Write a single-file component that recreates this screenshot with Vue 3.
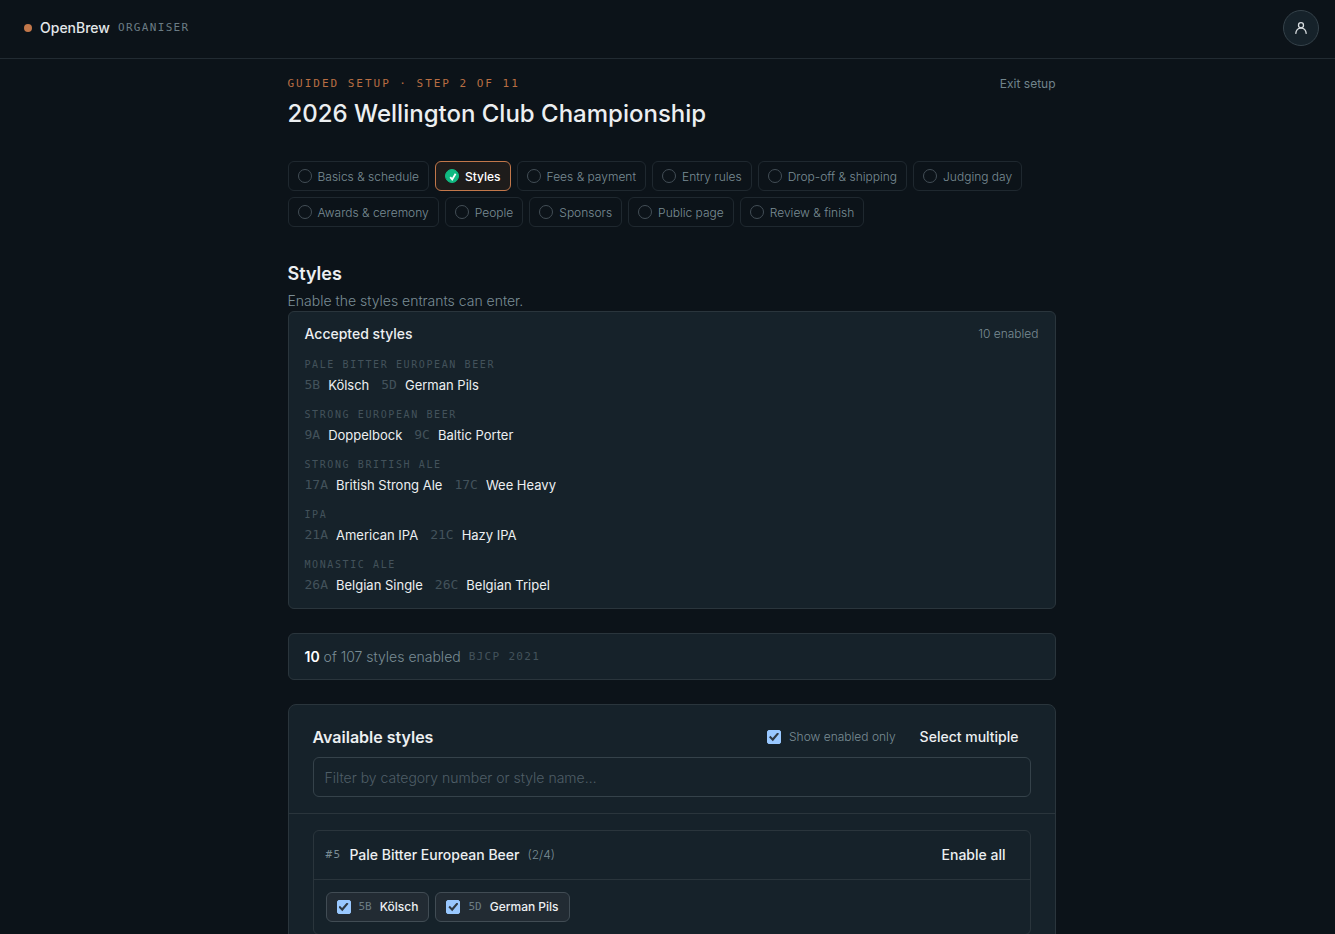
<template>
  <div class="page">
    <header class="topbar">
      <a class="brand" href="#">
        <span class="brand-dot"></span>
        <span class="brand-name">OpenBrew</span>
        <span class="brand-role">ORGANISER</span>
      </a>
      <button class="avatar" type="button" aria-label="Account">
        <svg viewBox="0 0 16 16" width="16" height="16" fill="none" stroke="currentColor" stroke-width="1.3" stroke-linecap="round">
          <circle cx="8" cy="5.2" r="2.5" />
          <path d="M2.800 13.400C3 10.200 5.200 8 8 8s5 2.200 5.200 5.400" />
        </svg>
      </button>
    </header>

    <main class="wizard">
      <div class="wizard-head">
        <p class="eyebrow">GUIDED SETUP · STEP 2 OF 11</p>
        <a class="exit" href="#">Exit setup</a>
      </div>
      <h1>2026 Wellington Club Championship</h1>

      <nav class="steps">
        <button
          v-for="step in steps"
          :key="step"
          type="button"
          class="step"
          :class="{ active: step === current }"
          @click="current = step"
        >
          <span class="step-mark">
            <svg v-if="step === current" viewBox="0 0 14 14" width="14" height="14" fill="none" stroke="currentColor" stroke-width="1.8">
              <path d="M4.200 7.200l2 2.200 3.400-5.600" />
            </svg>
          </span>
          {{ step }}
        </button>
      </nav>

      <h2>Styles</h2>
      <p class="lead">Enable the styles entrants can enter.</p>

      <section class="card accepted">
        <div class="accepted-head">
          <h3>Accepted styles</h3>
          <span class="enabled-count">10 enabled</span>
        </div>
        <div v-for="group in accepted" :key="group.name" class="group">
          <div class="group-name">{{ group.name }}</div>
          <div class="group-styles">
            <span v-for="s in group.styles" :key="s.code" class="accepted-style">
              <span class="code">{{ s.code }}</span>
              <span>{{ s.name }}</span>
            </span>
          </div>
        </div>
      </section>

      <section class="card summary">
        <span><strong>10</strong> of 107 styles enabled</span>
        <span class="guide">BJCP 2021</span>
      </section>

      <section class="card available">
        <div class="available-head">
          <div class="available-title">
            <h3>Available styles</h3>
            <label class="only">
              <input v-model="enabledOnly" type="checkbox" class="check" />
              Show enabled only
            </label>
            <button type="button" class="text-button">Select multiple</button>
          </div>
          <input
            v-model="filter"
            class="filter"
            type="text"
            aria-label="Filter styles"
            placeholder="Filter by category number or style name…"
          />
        </div>
        <div class="available-body">
          <div class="category">
            <div class="category-head">
              <span class="category-number">#5</span>
              <h4>Pale Bitter European Beer</h4>
              <span class="category-count">(2/4)</span>
              <button type="button" class="text-button">Enable all</button>
            </div>
            <div class="chips">
              <label v-for="s in chips" :key="s.code" class="chip">
                <input v-model="s.on" type="checkbox" class="check" />
                <span class="chip-code">{{ s.code }}</span>
                <span>{{ s.name }}</span>
              </label>
            </div>
          </div>
        </div>
      </section>
    </main>
  </div>
</template>

<script setup>
import { ref } from 'vue'

const steps = [
  'Basics & schedule',
  'Styles',
  'Fees & payment',
  'Entry rules',
  'Drop-off & shipping',
  'Judging day',
  'Awards & ceremony',
  'People',
  'Sponsors',
  'Public page',
  'Review & finish'
]
const current = ref('Styles')

const accepted = [
  { name: 'PALE BITTER EUROPEAN BEER', styles: [{ code: '5B', name: 'Kölsch' }, { code: '5D', name: 'German Pils' }] },
  { name: 'STRONG EUROPEAN BEER', styles: [{ code: '9A', name: 'Doppelbock' }, { code: '9C', name: 'Baltic Porter' }] },
  { name: 'STRONG BRITISH ALE', styles: [{ code: '17A', name: 'British Strong Ale' }, { code: '17C', name: 'Wee Heavy' }] },
  { name: 'IPA', styles: [{ code: '21A', name: 'American IPA' }, { code: '21C', name: 'Hazy IPA' }] },
  { name: 'MONASTIC ALE', styles: [{ code: '26A', name: 'Belgian Single' }, { code: '26C', name: 'Belgian Tripel' }] }
]

const enabledOnly = ref(true)
const filter = ref('')
const chips = ref([
  { code: '5B', name: 'Kölsch', on: true },
  { code: '5D', name: 'German Pils', on: true }
])
</script>

<style>
html {
  background: #0c1319;
}

body {
  margin: 0;
  overflow: hidden;
}

#app {
  height: 100vh;
  overflow: hidden;
}
</style>

<style scoped>
.page {
  --mono: "DejaVu Sans Mono", "Liberation Mono", monospace;
  --line: #2a353c;
  --muted: #7a8d95;
  --faint: #43525b;
  --text: #eceff1;
  min-height: 100vh;
  background: #0c1319;
  color: var(--text);
  font-family: Inter, "Liberation Sans", sans-serif;
  font-size: 14px;
  line-height: 20px;
}

.page *,
.page *::before {
  box-sizing: border-box;
}

h1,
h2,
h3,
h4,
p {
  margin: 0;
}

button {
  font-family: inherit;
  cursor: pointer;
}

a {
  text-decoration: none;
}

/* Top bar */
.topbar {
  display: flex;
  align-items: center;
  justify-content: space-between;
  padding: 10px 16px 12px 24px;
  border-bottom: 1px solid #222b32;
}

.brand {
  display: flex;
  align-items: center;
  gap: 8px;
  color: #e3e7e9;
}

.brand-dot {
  width: 8px;
  height: 8px;
  border-radius: 50%;
  background: #c2774a;
}

.brand-name {
  font-size: 14px;
  font-weight: 500;
}

.brand-role {
  font-family: var(--mono);
  font-size: 11px;
  letter-spacing: 0.12em;
  color: #6b7c84;
}

.avatar {
  display: grid;
  place-items: center;
  width: 36px;
  height: 36px;
  padding: 0;
  border: 1px solid #35424a;
  border-radius: 50%;
  background: #16222a;
  color: #d7dcdf;
}

/* Wizard */
.wizard {
  max-width: 776px;
  margin: 0 auto;
  padding: 15px 0 0 8px;
}

.wizard-head {
  display: flex;
  align-items: center;
  justify-content: space-between;
}

.eyebrow {
  font-family: var(--mono);
  font-size: 11px;
  letter-spacing: 0.18em;
  color: #b96e43;
}

.exit {
  font-size: 12px;
  color: #71848c;
}

h1 {
  margin-top: 4px;
  font-size: 24px;
  font-weight: 500;
  line-height: 32px;
}

.steps {
  display: flex;
  flex-wrap: wrap;
  gap: 6px;
  margin-top: 31px;
}

.step {
  display: flex;
  align-items: center;
  gap: 6px;
  height: 30px;
  padding: 0 9px;
  border: 1px solid #1f282f;
  border-radius: 6px;
  background: transparent;
  color: var(--muted);
  font-size: 12px;
  font-weight: 300;
}

.step-mark {
  display: grid;
  place-items: center;
  width: 14px;
  height: 14px;
  border: 1px solid #434e56;
  border-radius: 50%;
}

.step.active {
  border-color: #c2774a;
  background: #1e1c1b;
  color: #fff;
  font-weight: 500;
}

.step.active .step-mark {
  border-color: #10b981;
  background: #10b981;
}

h2 {
  margin-top: 34px;
  font-size: 18px;
  font-weight: 600;
  line-height: 26px;
}

.lead {
  margin-top: 4px;
  font-weight: 300;
  color: var(--muted);
}

.card {
  border: 1px solid var(--line);
  border-radius: 6px;
  background: #16222a;
}

/* Accepted styles */
.accepted {
  padding: 12px 16px 13px;
}

.accepted-head {
  display: flex;
  align-items: center;
  justify-content: space-between;
  margin-bottom: 13px;
}

.accepted-head h3 {
  font-size: 14px;
  font-weight: 500;
}

.enabled-count {
  font-size: 12px;
  font-weight: 300;
  color: var(--muted);
}

.group + .group {
  margin-top: 12px;
}

.group-name {
  font-family: var(--mono);
  font-size: 10px;
  line-height: 15px;
  letter-spacing: 0.16em;
  color: var(--faint);
}

.group-styles {
  display: flex;
  gap: 12px;
  margin-top: 3px;
  font-size: 13px;
}

.accepted-style {
  display: flex;
  gap: 8px;
}

.code {
  font-family: var(--mono);
  color: var(--faint);
}

/* Summary */
.summary {
  display: flex;
  align-items: center;
  gap: 8px;
  margin-top: 24px;
  padding: 12px 16px;
  font-weight: 300;
  line-height: 21px;
  color: var(--muted);
}

.summary strong {
  color: #fff;
  font-weight: 600;
}

.guide {
  font-family: var(--mono);
  font-size: 11px;
  letter-spacing: 0.12em;
  color: var(--faint);
}

/* Available styles */
.available {
  margin-top: 24px;
  border-radius: 8px;
}

.available-head {
  padding: 20px 24px 16px;
  border-bottom: 1px solid var(--line);
}

.available-title {
  display: flex;
  align-items: center;
}

.available-title h3 {
  flex: 1;
  font-size: 16px;
  font-weight: 600;
  line-height: 24px;
}

.only {
  display: flex;
  align-items: center;
  gap: 8px;
  margin-right: 12px;
  font-size: 12px;
  font-weight: 300;
  color: var(--muted);
}

.check {
  display: grid;
  place-items: center;
  width: 14px;
  height: 14px;
  margin: 0;
  border: 1px solid #5b6b75;
  border-radius: 2px;
  appearance: none;
}

.check:checked {
  border-color: #99c8ff;
  background: #99c8ff;
}

.check:checked::before {
  content: '';
  width: 10px;
  height: 9px;
  background: #2f3a44;
  clip-path: polygon(0 52%, 14% 37%, 36% 62%, 84% 0, 100% 15%, 38% 96%);
}

.text-button {
  padding: 0 12px;
  border: 0;
  background: none;
  color: var(--text);
  font-size: 14px;
  font-weight: 500;
  line-height: 24px;
}

.filter {
  display: block;
  width: 100%;
  height: 40px;
  margin-top: 8px;
  padding: 0 11px;
  border: 1px solid #35424a;
  border-radius: 6px;
  background: transparent;
  color: var(--text);
  font-family: inherit;
  font-size: 14px;
  font-weight: 300;
}

.filter::placeholder {
  color: #4f5e67;
  opacity: 1;
}

.available-body {
  padding: 16px 24px;
}

.category {
  border: 1px solid var(--line);
  border-radius: 6px;
}

.category-head {
  display: flex;
  align-items: center;
  gap: 8px;
  padding: 12px;
  border-bottom: 1px solid var(--line);
}

.category-head h4 {
  font-size: 14px;
  font-weight: 500;
}

.category-number {
  font-family: var(--mono);
  font-size: 11px;
  letter-spacing: 0.12em;
  color: var(--muted);
}

.category-count {
  font-size: 12px;
  font-weight: 300;
  color: var(--muted);
}

.category-head .text-button {
  margin-left: auto;
}

.chips {
  display: flex;
  flex-wrap: wrap;
  gap: 6px;
  padding: 12px;
}

.chip {
  display: flex;
  align-items: center;
  gap: 8px;
  height: 30px;
  padding: 0 10px;
  border: 1px solid #414c54;
  border-radius: 6px;
  background: #222b33;
  font-size: 12px;
  font-weight: 500;
}

.chip-code {
  font-family: var(--mono);
  font-size: 11px;
  font-weight: 400;
  color: #6b7c84;
}
</style>
